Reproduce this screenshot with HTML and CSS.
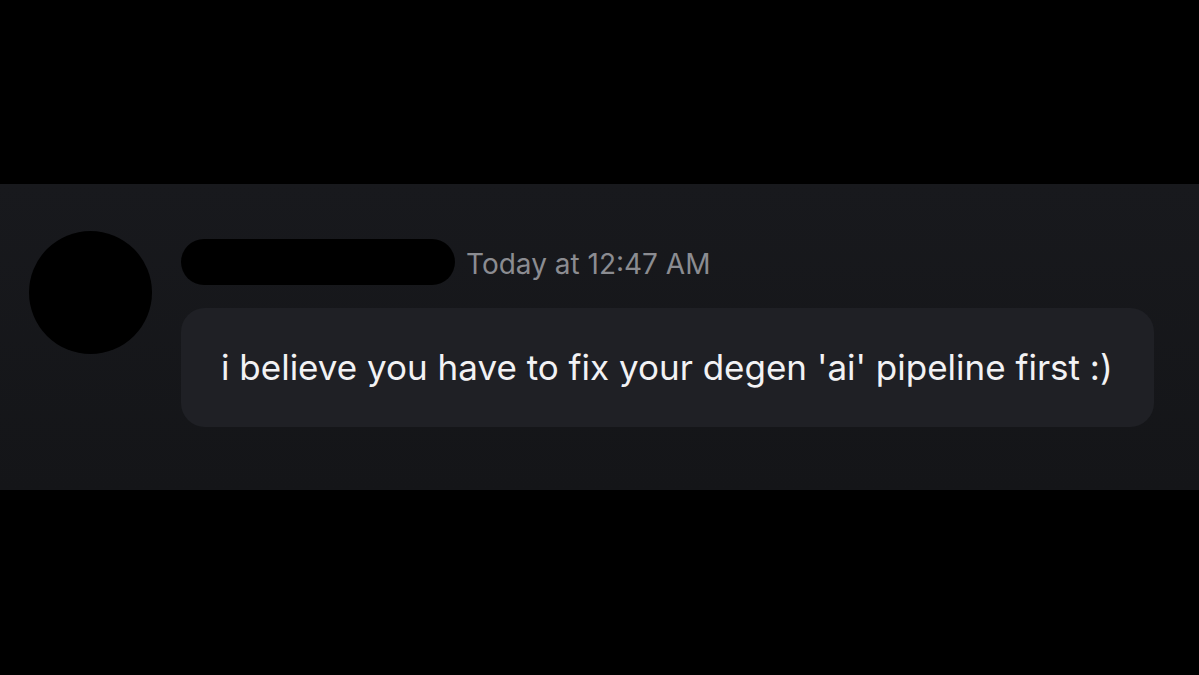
FILE: index.html
```html
<!DOCTYPE html>
<html>
<head>
    <title>Message</title>
    <link rel="stylesheet" href="styles.css">
</head>
<body>
    <div class="frame">
        <div class="message-row">
            <div class="avatar"></div>
            <div class="message-body">
                <div class="message-header">
                    <div class="name-redacted"></div>
                    <span class="timestamp">Today at 12:47 AM</span>
                </div>
                <div class="bubble">i believe you have to fix your degen 'ai' pipeline first :)</div>
            </div>
        </div>
    </div>
</body>
</html>
```

FILE: styles.css
```css
* {
    box-sizing: border-box;
    margin: 0;
    padding: 0;
}

body {
    background: #000;
    font-family: Inter, "Liberation Sans", Arial, sans-serif;
    height: 100vh;
    overflow: hidden;
}

.frame {
    margin-top: 184px;
    height: 306px;
    background: linear-gradient(180deg, #18191d 0%, #141518 100%);
}

.message-row {
    display: flex;
    padding: 47px 45px 0 29px;
    gap: 29px;
}

.avatar {
    width: 123px;
    height: 123px;
    border-radius: 50%;
    background: #000;
    flex-shrink: 0;
}

.message-body {
    flex-grow: 1;
    padding-top: 8px;
}

.message-header {
    display: flex;
    align-items: center;
    gap: 11px;
    height: 46px;
}

.name-redacted {
    width: 274px;
    height: 46px;
    border-radius: 23px;
    background: #000;
}

.timestamp {
    color: #8b8c91;
    font-size: 28px;
    padding-top: 4px;
}

.bubble {
    margin-top: 23px;
    height: 119px;
    border-radius: 24px;
    background: #1f2025;
    color: #f2f2f4;
    font-size: 35px;
    display: flex;
    align-items: center;
    padding: 0 40px 2px;
}
```
